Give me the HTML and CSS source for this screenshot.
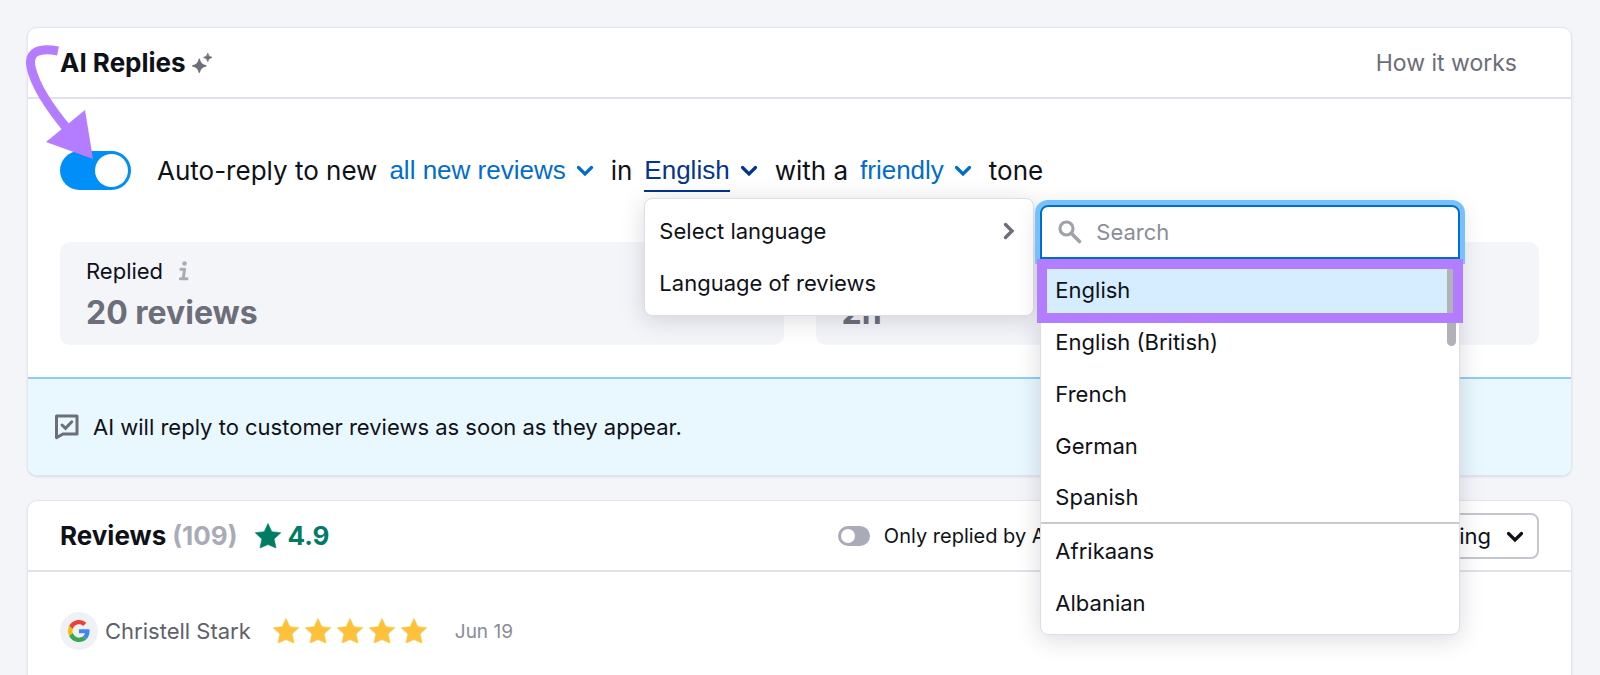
FILE: index.html
```html
<!DOCTYPE html>
<html lang="en">
<head>
  <meta charset="UTF-8" />
  <meta name="viewport" content="width=device-width, initial-scale=1.0" />
  <title>AI Replies</title>
  <link rel="stylesheet" href="styles.css">
</head>
<body>

  <!-- Shared icons -->
  <svg class="sprite" aria-hidden="true">
    <symbol id="chevron" viewBox="0 0 18 12">
      <path d="M2.5 2.5L9 9L15.5 2.5" fill="none" stroke="currentColor" stroke-width="3.2" stroke-linecap="round" stroke-linejoin="miter" />
    </symbol>
    <symbol id="star" viewBox="0 0 26 26">
      <path d="M13 0.5L16.8 8.7L25.8 9.7L19.1 15.9L21 25L13 21.6L5 25L6.9 15.9L0.2 9.7L9.2 8.7Z" fill="currentColor" stroke="currentColor" stroke-width="0.6" stroke-linejoin="round" />
    </symbol>
  </svg>

  <main class="page">

    <section class="card">
      <header class="card-header">
        <h2 class="card-title">AI Replies
          <svg class="sparkles" width="20" height="20" viewBox="0 0 20 20" fill="#6c6e79">
            <path d="M7.3 5.8Q8 12 14.3 12.8Q8 13.6 7.3 19.8Q6.6 13.6 0.3 12.8Q6.6 12 7.3 5.8Z" stroke="#6c6e79" stroke-width="1.2" />
            <path d="M15.8 0.2Q16.3 3.9 20 4.4Q16.3 4.9 15.8 8.6Q15.3 4.9 11.6 4.4Q15.3 3.9 15.8 0.2Z" stroke="#6c6e79" stroke-width="0.8" />
          </svg>
        </h2>
        <a href="#" class="how-link">How it works</a>
      </header>

      <div class="rule">
        <div class="toggle-wrap">
          <input type="checkbox" class="toggle" id="autoReply" aria-label="Auto-reply" checked />
          <svg class="arrow" width="70" height="118" viewBox="0 0 70 118">
            <path d="M32 7C13 3 2 8 5 23C9 42 22 62 43 87" fill="none" stroke="#b47dff" stroke-width="9" />
            <path d="M20 98L59 66L67 115Z" fill="#b47dff" />
          </svg>
        </div>
        <label for="autoReply" class="rule-text">Auto-reply to new</label>
        <button class="trigger">all new reviews <svg width="18" height="12"><use href="#chevron" /></svg></button>
        <span class="rule-text">in</span>
        <div class="dropdown">
          <button class="trigger open" aria-haspopup="true" aria-expanded="true"><span>English</span> <svg width="18" height="12"><use href="#chevron" /></svg></button>
          <div class="menu">
            <button class="menu-item">Select language
              <svg width="12" height="18" viewBox="0 0 12 18"><path d="M2.5 2.5L9 9L2.5 15.5" fill="none" stroke="#6c6e79" stroke-width="3.4" stroke-linecap="round" /></svg>
            </button>
            <button class="menu-item">Language of reviews</button>
          </div>
          <div class="submenu">
            <label class="search">
              <svg width="24" height="24" viewBox="0 0 24 24" fill="none" stroke="#a0a2aa">
                <circle cx="8.5" cy="8.5" r="6.5" stroke-width="3.2" />
                <path d="M13.5 13.5L21.5 21.5" stroke-width="3.6" stroke-linecap="round" />
              </svg>
              <input type="text" placeholder="Search" aria-label="Search" />
            </label>
            <div class="languages">
              <button class="menu-item selected">English</button>
              <button class="menu-item">English (British)</button>
              <button class="menu-item">French</button>
              <button class="menu-item">German</button>
              <button class="menu-item last">Spanish</button>
              <button class="menu-item">Afrikaans</button>
              <button class="menu-item">Albanian</button>
            </div>
            <div class="scrollbar"></div>
            <div class="highlight"></div>
          </div>
        </div>
        <span class="rule-text">with a</span>
        <button class="trigger">friendly <svg width="18" height="12"><use href="#chevron" /></svg></button>
        <span class="rule-text">tone</span>
      </div>

      <div class="stats">
        <div class="stat">
          <div class="stat-label">Replied
            <svg width="12" height="20" viewBox="0 0 12 20" fill="none" stroke="#a9abb6" stroke-width="3" stroke-linecap="round" stroke-linejoin="round">
              <circle cx="6.5" cy="2.5" r="2.3" fill="#a9abb6" stroke="none" />
              <path d="M2.8 8.3H6.6L5.2 17.8M2.4 17.8H9" />
            </svg>
          </div>
          <div class="stat-value">20 reviews</div>
        </div>
        <div class="stat">
          <div class="stat-label">Saved</div>
          <div class="stat-value">2h</div>
        </div>
      </div>

      <div class="notice">
        <svg width="24" height="26" viewBox="0 0 24 26" fill="none" stroke="#6c6e79" stroke-width="3">
          <path d="M1.5 2H22V20H8L1.5 23.6Z" stroke-linejoin="round" />
          <path d="M7 11L10.5 14.3L16.8 7.8" stroke-linecap="round" />
        </svg>
        AI will reply to customer reviews as soon as they appear.
      </div>
    </section>

    <section class="card reviews">
      <header class="card-header">
        <h2 class="card-title">Reviews <span class="count">(109)</span>
          <span class="rating"><svg width="26" height="26"><use href="#star" /></svg>4.9</span>
        </h2>
        <div class="filters">
          <label class="only-ai"><input type="checkbox" class="toggle small" />Only replied by AI</label>
          <div class="sort">
            <select aria-label="Sort"><option>Sorting</option></select>
            <svg width="18" height="12"><use href="#chevron" /></svg>
          </div>
        </div>
      </header>

      <article class="review">
        <span class="avatar">
          <svg width="22" height="22" viewBox="0 0 48 48">
            <path fill="#ea4335" d="M24 9.5c3.54 0 6.71 1.22 9.21 3.6l6.85-6.85C35.9 2.38 30.47 0 24 0 14.62 0 6.51 5.38 2.56 13.22l7.98 6.19C12.43 13.72 17.74 9.5 24 9.5z" />
            <path fill="#4285f4" d="M46.98 24.55c0-1.57-.15-3.09-.38-4.55H24v9.02h12.94c-.58 2.96-2.26 5.48-4.78 7.18l7.73 6c4.51-4.18 7.09-10.36 7.09-17.65z" />
            <path fill="#fbbc05" d="M10.53 28.59c-.48-1.45-.76-2.99-.76-4.59s.27-3.14.76-4.59l-7.98-6.19C.92 16.46 0 20.12 0 24c0 3.88.92 7.54 2.56 10.78l7.97-6.19z" />
            <path fill="#34a853" d="M24 48c6.48 0 11.93-2.13 15.89-5.81l-7.73-6c-2.15 1.45-4.92 2.3-8.16 2.3-6.26 0-11.57-4.22-13.47-9.91l-7.98 6.19C6.51 42.62 14.62 48 24 48z" />
          </svg>
        </span>
        <span class="author">Christell Stark</span>
        <span class="stars">
          <svg width="26" height="26"><use href="#star" /></svg>
          <svg width="26" height="26"><use href="#star" /></svg>
          <svg width="26" height="26"><use href="#star" /></svg>
          <svg width="26" height="26"><use href="#star" /></svg>
          <svg width="26" height="26"><use href="#star" /></svg>
        </span>
        <time class="date">Jun 19</time>
      </article>
    </section>

  </main>

</body>
</html>
```
FILE: styles.css
```css
* {
  margin: 0;
  padding: 0;
  box-sizing: border-box;
}

body {
  font-family: Inter, "Liberation Sans", sans-serif;
  font-size: 22px;
  background-color: #f4f5f9;
  color: #0f1118;
  overflow: hidden;
}

button,
input,
select {
  font: inherit;
  color: inherit;
  background: none;
  border: none;
}

button {
  cursor: pointer;
}

svg {
  flex-shrink: 0;
}

.sprite {
  position: absolute;
  width: 0;
  height: 0;
}

.page {
  display: flex;
  flex-direction: column;
  gap: 24px;
  height: 100vh;
  padding: 27px 28px 0 27px;
}

.card {
  background: #fff;
  border: 1px solid #e4e5ed;
  border-radius: 10px;
  box-shadow: 0 1px 2px #d8dae4;
}

.card-header {
  display: flex;
  align-items: center;
  justify-content: space-between;
  height: 71px;
  padding: 0 32px;
  border-bottom: 2px solid #e0e1e9;
}

.card-title {
  display: flex;
  align-items: center;
  gap: 6px;
  font-size: 26px;
  font-weight: 700;
}

.how-link {
  margin-right: 22px;
  font-size: 23px;
  color: #6c6e79;
  text-decoration: none;
}

/* Auto-reply sentence */

.rule {
  display: flex;
  align-items: center;
  height: 143px;
  padding: 0 32px;
}

.rule-text {
  margin-right: 12px;
  font-size: 26px;
}

.toggle-wrap {
  position: relative;
  display: flex;
  margin-right: 26px;
}

.toggle {
  appearance: none;
  width: 71px;
  height: 39px;
  padding: 3px;
  border-radius: 20px;
  background: #a9abb6;
  cursor: pointer;
}

.toggle::before {
  content: "";
  display: block;
  width: 33px;
  height: 33px;
  border-radius: 50%;
  background: #fff;
}

.toggle:checked {
  background: #008ff8;
}

.toggle:checked::before {
  margin-left: auto;
}

.toggle.small {
  width: 32px;
  height: 20px;
}

.toggle.small::before {
  width: 14px;
  height: 14px;
}

.arrow {
  position: absolute;
  left: -34px;
  top: -107px;
  z-index: 3;
}

.trigger {
  display: flex;
  align-items: center;
  gap: 10px;
  margin-right: 17px;
  font-family: "Liberation Sans", sans-serif;
  font-size: 26px;
  color: #006dca;
}

.trigger.open {
  color: #04358c;
}

.trigger.open span {
  padding: 4px 0;
  box-shadow: 0 2px 0 #04358c;
}

/* Menus */

.dropdown {
  position: relative;
}

.menu,
.submenu {
  position: absolute;
  background: #fff;
  border: 1px solid #dcdde8;
  border-radius: 8px;
  box-shadow: 0 4px 24px rgba(25, 27, 50, 0.16);
}

.menu {
  top: 47px;
  left: 0;
  width: 390px;
  padding: 6px 0;
  z-index: 1;
}

.menu-item {
  display: flex;
  align-items: center;
  justify-content: space-between;
  width: 100%;
  height: 52px;
  padding: 0 18px 0 14px;
  text-align: left;
}

.submenu {
  top: 54px;
  left: 396px;
  width: 420px;
  z-index: 2;
}

.search {
  display: flex;
  align-items: center;
  gap: 14px;
  height: 54px;
  margin: -1px;
  padding: 0 16px;
  border: 2px solid #006dca;
  border-radius: 8px 8px 0 0;
  box-shadow: 0 0 0 5px #77c1f8;
}

.search input {
  flex: 1;
  min-width: 0;
  outline: none;
}

.search input::placeholder {
  color: #898d9a;
  opacity: 1;
}

.languages {
  padding: 6px 0 5px;
}

.menu-item.selected {
  background: #d6edff;
}

.menu-item.last {
  border-bottom: 2px solid #c7c9d3;
}

.languages .last + .menu-item {
  margin-top: 1px;
}

.scrollbar {
  position: absolute;
  top: 60px;
  right: 3px;
  width: 9px;
  height: 80px;
  border-radius: 5px;
  background: #b0b2b8;
}

.highlight {
  position: absolute;
  top: 53px;
  left: -4px;
  right: -4px;
  height: 64px;
  border: 10px solid #b47dff;
}

/* Stats */

.stats {
  display: grid;
  grid-template-columns: 1fr 1fr;
  gap: 32px;
  padding: 0 32px 32px;
}

.stat {
  height: 103px;
  padding: 13px 26px;
  border-radius: 10px;
  background: #f4f5f9;
}

.stat-label {
  display: flex;
  align-items: center;
  gap: 15px;
  line-height: 32px;
}

.stat-value {
  line-height: 52px;
  font-size: 32px;
  font-weight: 700;
  color: #6c6e79;
}

.notice {
  display: flex;
  align-items: center;
  gap: 14px;
  height: 98px;
  padding: 0 27px;
  border-top: 2px solid #8ecdfb;
  border-radius: 0 0 9px 9px;
  background: #e9f7ff;
}

/* Reviews */

.reviews {
  flex: 1;
  border-bottom: none;
  border-radius: 10px 10px 0 0;
}

.count {
  color: #a9abb6;
}

.rating {
  display: flex;
  align-items: center;
  gap: 6px;
  margin-left: 12px;
  color: #007c65;
}

.filters {
  display: flex;
  align-items: center;
  gap: 182px;
}

.only-ai {
  display: flex;
  align-items: center;
  gap: 14px;
  font-size: 20px;
}

.sort {
  position: relative;
}

.sort select {
  appearance: none;
  width: 306px;
  height: 46px;
  padding-right: 46px;
  border: 2px solid #c4c7cf;
  border-radius: 8px;
  text-align: right;
  text-align-last: right;
}

.sort svg {
  position: absolute;
  top: 18px;
  right: 15px;
  pointer-events: none;
}

.review {
  display: flex;
  align-items: center;
  padding: 40px 32px;
}

.avatar {
  display: flex;
  align-items: center;
  justify-content: center;
  width: 38px;
  height: 38px;
  margin-right: 7px;
  border-radius: 50%;
  background: #eff1f5;
}

.author {
  color: #5f616c;
}

.stars {
  display: flex;
  gap: 6px;
  margin: 0 28px 0 22px;
  color: #fdc23c;
}

.date {
  font-size: 19px;
  color: #898d9a;
}
```
